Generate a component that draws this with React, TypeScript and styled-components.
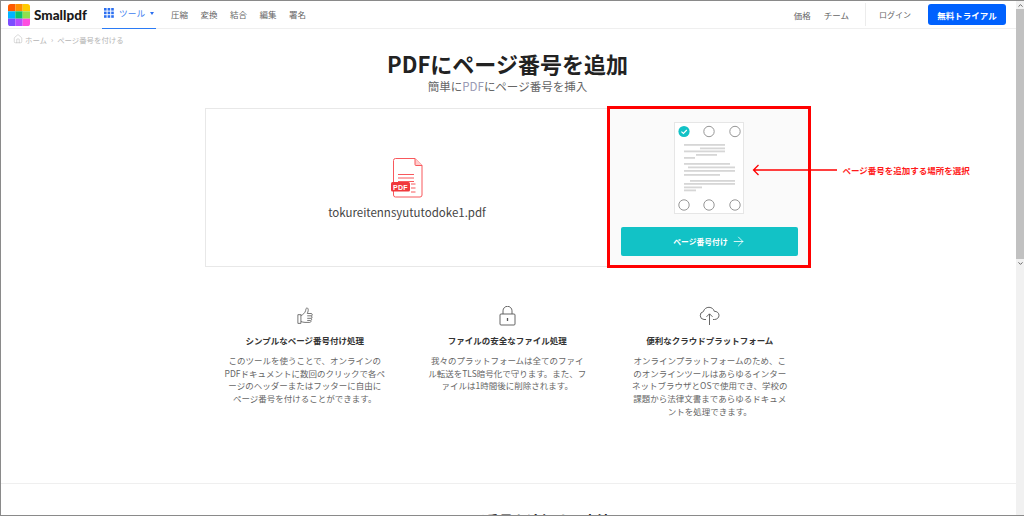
import styled, { createGlobalStyle } from "styled-components";
import { ArrowRight, ChevronUp, ChevronDown, Home } from "lucide-react";

const JP = `"Noto Sans CJK JP", "Noto Sans", sans-serif`;

const Global = createGlobalStyle`
  html, body {
    margin: 0;
    padding: 0;
    background: #fff;
    overflow: hidden;
  }
  * {
    box-sizing: border-box;
  }
`;

const logoColors = [
  ["#ff5a00", "#ff9100", "#ffcb00"],
  ["#00b4ff", "#0bc46a", "#8fe04e"],
  ["#7c4dff", "#b64dff", "#ff4fe0"],
];

function Logo() {
  return (
    <svg width="22" height="22" viewBox="0 0 21 21">
      <defs>
        <clipPath id="logo-clip">
          <rect width="21" height="21" rx="2.5" />
        </clipPath>
      </defs>
      <g clipPath="url(#logo-clip)">
        {logoColors.map((row, y) =>
          row.map((c, x) => (
            <rect key={`${x}-${y}`} x={x * 7} y={y * 7} width="7" height="7" fill={c} />
          ))
        )}
      </g>
    </svg>
  );
}

function GridDots() {
  const dots = [0, 1, 2];
  return (
    <svg width="10" height="10" viewBox="0 0 10 10" fill="#2b6ff0">
      {dots.map((y) =>
        dots.map((x) => <rect key={`${x}${y}`} x={x * 3.6} y={y * 3.6} width="2.6" height="2.6" />)
      )}
    </svg>
  );
}

function PdfFile() {
  return (
    <svg width="32" height="40" viewBox="0 0 32 40" fill="none" stroke="#f8585c" strokeWidth="1">
      <path d="M2.500 2.500a2 2 0 0 1 2-2h19.500l7 7v29.500a2 2 0 0 1-2 2h-24.500a2 2 0 0 1-2-2z" />
      <path d="M24 .5v6a1 1 0 0 0 1 1h6" fill="#fcc" />
      <path d="M7 16.500h16M7 20h16M7 23.500h16M20 26h4.500M20 30h4.500M20 34h4.500" />
      <rect x="0" y="24" width="19" height="9.500" rx="1.500" fill="#f0383c" stroke="none" />
      <text x="9.500" y="31.600" textAnchor="middle" fontFamily="Liberation Sans, sans-serif" fontSize="7" fontWeight="700" letterSpacing="0.3" fill="#fff" stroke="none">
        PDF
      </text>
    </svg>
  );
}

// x ranges of the grey "text" bars on the little page preview, with a small gap to look like words
const textLines: [number, number, number][] = [
  [22, 10, 51], [25.500, 26, 51], [28.500, 10, 51], [32, 22, 43], [35, 10, 21],
  [41, 10, 56], [44.500, 14, 61], [48, 10, 61], [52, 10, 46],
  [58, 16, 61], [61, 10, 61], [64.500, 10, 28], [67.500, 10, 22],
];

function DocPreview() {
  const top = [10, 35, 61];
  return (
    <svg width="70" height="92" viewBox="0 0 70 92" fill="none">
      <rect x="0.5" y="0.5" width="69" height="91" fill="#fff" stroke="#e6e6e6" />
      {textLines.map(([y, s, e]) => (
        <rect key={y} x={s} y={y} width={e - s} height="1.8" fill="#d6d6d6" />
      ))}
      <circle cx="10" cy="9.5" r="5.6" fill="#12c2c6" />
      <path d="M7.4 9.6l2 1.9 3.4-3.5" stroke="#fff" strokeWidth="1.1" />
      {top.slice(1).map((x) => (
        <circle key={x} cx={x} cy="9.5" r="5.2" stroke="#8a8a8a" strokeWidth="0.9" fill="#fff" />
      ))}
      {top.map((x) => (
        <circle key={x} cx={x} cy="83" r="5.2" stroke="#8a8a8a" strokeWidth="0.9" fill="#fff" />
      ))}
    </svg>
  );
}

function ThumbIcon() {
  return (
    <svg width="16" height="18" viewBox="0 0 18 20" fill="none" stroke="#555" strokeWidth="0.9">
      <path d="M1 8.5h3.4v9.8H1z" />
      <path d="M4.4 9.5c2.2-.8 4.6-3 5.3-5.5.3-1.2.2-2.6 1.2-3 1.5-.3 1.9 1.4 1.7 3-.1 1-.7 2.3-1 3.2h4.2c1.8 0 1.9 2.6.2 2.8 1.4.3 1.3 2.5-.2 2.6 1 .5.9 2.3-.4 2.4.7.7.3 2.2-1.1 2.2H9c-2 0-3-.6-4.6-1" />
      <path d="M11.5 9.8h4.3M11.5 12.6h4.2M11.5 15h3.4" />
    </svg>
  );
}

function LockIcon() {
  return (
    <svg width="17" height="20" viewBox="0 0 17 20" fill="none" stroke="#555" strokeWidth="0.9">
      <rect x="1" y="8" width="15" height="11" rx="1" />
      <path d="M4 8V4.8a4.5 4.5 0 0 1 9 0V8" />
      <path d="M8.5 12v3" strokeWidth="1.3" />
    </svg>
  );
}

function CloudIcon() {
  return (
    <svg width="21" height="20" viewBox="0 0 21 20" fill="none" stroke="#555" strokeWidth="0.9">
      <path d="M7 13.5H5a4 4 0 0 1-.6-7.9C5 3 7.4 1.2 10 1.3c2.8.1 4.7 1.8 5.3 4 2.6-.1 4.7 1.7 4.7 4 0 2.4-2 4.2-4.600 4.200H14" />
      <path d="M10.500 19V8M7.500 10.800l3-3 3 3" />
    </svg>
  );
}

export default function App() {
  return (
    <Frame>
      <Global />
      <Page>
        <Header>
          <LogoLink>
            <Logo />
            <Brand>Smallpdf</Brand>
          </LogoLink>
          <ToolsTab>
            <GridDots />
            <span>ツール</span>
            <Caret />
          </ToolsTab>
          <NavList>
            <NavItem>圧縮</NavItem>
            <NavItem>変換</NavItem>
            <NavItem>結合</NavItem>
            <NavItem>編集</NavItem>
            <NavItem>署名</NavItem>
          </NavList>
          <HeaderRight>
            <NavItem>価格</NavItem>
            <NavItem>チーム</NavItem>
            <Separator />
            <NavItem $size={8}>ログイン</NavItem>
            <TrialButton>無料トライアル</TrialButton>
          </HeaderRight>
        </Header>

        <Breadcrumb>
          <Home size={10} strokeWidth={1.2} />
          <span>ホーム</span>
          <Chevron>›</Chevron>
          <span>ページ番号を付ける</span>
        </Breadcrumb>

        <Title>PDFにページ番号を追加</Title>
        <Subtitle>
          簡単に<Light>PDF</Light>にページ番号を挿入
        </Subtitle>

        <Workspace>
          <FilePanel>
            <PdfFile />
            <FileName>tokureitennsyututodoke1.pdf</FileName>
          </FilePanel>
          <OptionsPanel>
            <DocPreview />
            <PrimaryButton>
              ページ番号付け
              <ArrowRight size={15} strokeWidth={1.3} />
            </PrimaryButton>
          </OptionsPanel>
          <Callout>
            <CalloutArrow width="85" height="12" viewBox="0 0 85 12" fill="none" stroke="#ff0000" strokeWidth="1.300">
              <path d="M85 6H1.500M6.500 1L1.500 6l5 5" />
            </CalloutArrow>
            <CalloutText>ページ番号を追加する場所を選択</CalloutText>
          </Callout>
        </Workspace>

        <Features>
          <Feature>
            <IconSlot>
              <ThumbIcon />
            </IconSlot>
            <FeatureTitle>シンプルなページ番号付け処理</FeatureTitle>
            <FeatureText>
              このツールを使うことで、オンラインの
              <br />
              PDFドキュメントに数回のクリックで各ペ
              <br />
              ージのヘッダーまたはフッターに自由に
              <br />
              ページ番号を付けることができます。
            </FeatureText>
          </Feature>
          <Feature>
            <IconSlot>
              <LockIcon />
            </IconSlot>
            <FeatureTitle>ファイルの安全なファイル処理</FeatureTitle>
            <FeatureText>
              我々のプラットフォームは全てのファイ
              <br />
              ル転送をTLS暗号化で守ります。また、フ
              <br />
              ァイルは1時間後に削除されます。
            </FeatureText>
          </Feature>
          <Feature>
            <IconSlot>
              <CloudIcon />
            </IconSlot>
            <FeatureTitle>便利なクラウドプラットフォーム</FeatureTitle>
            <FeatureText>
              オンラインプラットフォームのため、こ
              <br />
              のオンラインツールはあらゆるインター
              <br />
              ネットブラウザとOSで使用でき、学校の
              <br />
              課題から法律文書まであらゆるドキュメ
              <br />
              ントを処理できます。
            </FeatureText>
          </Feature>
        </Features>

        <Divider />
        <NextHeading>PDFにページ番号を追加する方法</NextHeading>
      </Page>
      <Scrollbar>
        <ScrollButton>
          <ChevronUp size={7} strokeWidth={3} />
        </ScrollButton>
        <ScrollThumb />
        <ScrollButton>
          <ChevronDown size={7} strokeWidth={3} />
        </ScrollButton>
      </Scrollbar>
    </Frame>
  );
}

const Frame = styled.div`
  display: flex;
  width: 1024px;
  height: 516px;
  overflow: hidden;
  border-top: 1px solid #8a8a8a;
  border-left: 1px solid #8a8a8a;
  border-bottom: 1px solid #8a8a8a;
  font-family: ${JP};
  background: #fff;
`;

const Page = styled.div`
  flex: 1;
  min-width: 0;
  display: flex;
  flex-direction: column;
  align-items: center;
`;

const Header = styled.header`
  align-self: stretch;
  flex: none;
  display: flex;
  align-items: center;
  height: 28px;
  padding: 0 10px 0 7px;
  border-bottom: 1px solid #efefef;
`;

const LogoLink = styled.div`
  display: flex;
  align-items: center;
  gap: 4px;
  width: 94px;
`;

const Brand = styled.span`
  font-family: Lato, sans-serif;
  font-weight: 900;
  font-size: 13.500px;
  color: #1a1a1a;
`;

const ToolsTab = styled.div`
  display: flex;
  align-items: center;
  gap: 5px;
  height: 28px;
  width: 54px;
  padding: 0 0 2px 2px;
  border-bottom: 1.500px solid #2b7bf5;
  font-size: 8.700px;
  color: #3f81ef;
`;

const Caret = styled.i`
  border-left: 2.500px solid transparent;
  border-right: 2.500px solid transparent;
  border-top: 3px solid #2b6ff0;
`;

const NavList = styled.nav`
  display: flex;
  align-items: center;
  gap: 12.500px;
  margin: 0 0 2px 15px;
`;

const NavItem = styled.span<{ $size?: number }>`
  font-size: ${(props) => props.$size ?? 8.5}px;
  color: #666;
  white-space: nowrap;
`;

const HeaderRight = styled.div`
  display: flex;
  align-items: center;
  gap: 13px;
  margin-left: auto;
`;

const Separator = styled.div`
  width: 1px;
  height: 23px;
  margin: 0 0 0 3px;
  background: #ececec;
`;

const TrialButton = styled.button`
  width: 78px;
  height: 21px;
  margin-left: 4px;
  border: none;
  border-radius: 3px;
  background: #0061fe;
  color: #fff;
  font-family: ${JP};
  font-size: 8.500px;
  font-weight: 700;
  padding: 0;
`;

const Breadcrumb = styled.div`
  align-self: stretch;
  flex: none;
  display: flex;
  align-items: center;
  gap: 2px;
  height: 20px;
  padding-left: 12px;
  font-size: 7.400px;
  color: #b4b4b4;
`;

const Chevron = styled.span`
  margin: 0 2px;
`;

const Title = styled.h1`
  flex: none;
  margin: 0 2px 0 0;
  font-size: 22px;
  line-height: 28px;
  font-weight: 700;
  color: #222;
`;

const Subtitle = styled.p`
  flex: none;
  margin: 1px 2px 1px 0;
  font-size: 11.500px;
  line-height: 16px;
  color: #666;
`;

const Light = styled.span`
  color: #9a9ab4;
`;

const Workspace = styled.section`
  flex: none;
  position: relative;
  display: flex;
  align-items: flex-start;
  width: 606px;
  height: 159px;
  margin: 13px 2px 0 0;
`;

const FilePanel = styled.div`
  width: 404px;
  height: 159px;
  display: flex;
  flex-direction: column;
  align-items: center;
  justify-content: center;
  gap: 6px;
  padding-top: 3px;
  border: 1px solid #e8e8e8;
  border-right: none;
`;

const FileName = styled.div`
  font-size: 11.500px;
  line-height: 16px;
  color: #444;
`;

const OptionsPanel = styled.div`
  width: 200px;
  height: 158px;
  display: flex;
  flex-direction: column;
  align-items: center;
  gap: 13px;
  padding-top: 14px;
  background: #fafafa;
  outline: 3px solid #ff0000;
  outline-offset: -1px;
`;

const PrimaryButton = styled.button`
  display: flex;
  align-items: center;
  justify-content: center;
  flex: none;
  gap: 3px;
  width: 177px;
  height: 29px;
  margin-left: 2px;
  border: none;
  border-radius: 2px;
  background: #12c2c6;
  color: #fff;
  font-family: ${JP};
  font-size: 7.800px;
  font-weight: 700;
  padding: 0;
`;

const Callout = styled.div`
  position: absolute;
  left: 547px;
  top: 56px;
  display: flex;
  align-items: center;
  gap: 6px;
`;

const CalloutArrow = styled.svg`
  flex: none;
`;

const CalloutText = styled.span`
  font-size: 8.500px;
  font-weight: 700;
  color: #ff1a1a;
  white-space: nowrap;
`;

const Features = styled.section`
  flex: none;
  display: grid;
  grid-template-columns: repeat(3, 202.500px);
  width: 607.500px;
  margin: 39px 2.500px 0 0;
`;

const Feature = styled.article`
  display: flex;
  flex-direction: column;
  align-items: center;
  text-align: center;
`;

const IconSlot = styled.div`
  display: flex;
  align-items: center;
  justify-content: center;
  height: 20px;
`;

const FeatureTitle = styled.h3`
  margin: 8px 0 0;
  font-size: 8.500px;
  line-height: 13px;
  font-weight: 700;
  color: #333;
  white-space: nowrap;
`;

const FeatureText = styled.p`
  margin: 7px 0 0;
  font-size: 8.500px;
  line-height: 12.700px;
  color: #666;
  white-space: nowrap;
`;

const Divider = styled.hr`
  flex: none;
  align-self: stretch;
  height: 1px;
  margin: 65.500px 0 0;
  border: none;
  background: #efefef;
`;

const NextHeading = styled.h2`
  flex: none;
  height: 20px;
  margin: 26px 4px 0 0;
  font-size: 14px;
  line-height: 20px;
  font-weight: 700;
  color: #222;
`;

const Scrollbar = styled.div`
  flex: none;
  width: 8px;
  display: flex;
  flex-direction: column;
  background: #f1f1f1;
`;

const ScrollButton = styled.div`
  flex: none;
  display: flex;
  align-items: center;
  justify-content: center;
  height: 8px;
  color: #555;
`;

const ScrollThumb = styled.div`
  flex: none;
  height: 250px;
  background: #c1c1c1;
`;
